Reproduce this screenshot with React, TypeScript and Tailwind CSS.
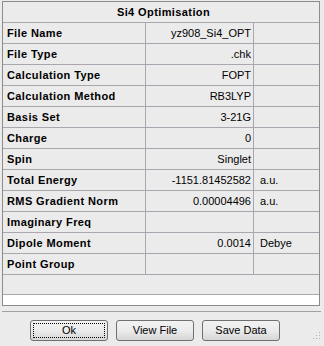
import React from 'react';

type Row = { label: string; value?: string; unit?: string };

const rows: Row[] = [
  { label: 'File Name', value: 'yz908_Si4_OPT' },
  { label: 'File Type', value: '.chk' },
  { label: 'Calculation Type', value: 'FOPT' },
  { label: 'Calculation Method', value: 'RB3LYP' },
  { label: 'Basis Set', value: '3-21G' },
  { label: 'Charge', value: '0' },
  { label: 'Spin', value: 'Singlet' },
  { label: 'Total Energy', value: '-1151.81452582', unit: 'a.u.' },
  { label: 'RMS Gradient Norm', value: '0.00004496', unit: 'a.u.' },
  { label: 'Imaginary Freq' },
  { label: 'Dipole Moment', value: '0.0014', unit: 'Debye' },
  { label: 'Point Group' },
];

function Button({ label, focused }: { label: string; focused?: boolean }) {
  return (
    <button className="relative w-[78px] h-[21px] rounded-[3px] border border-[#707070] bg-gradient-to-b from-[#f2f2f2] via-[#ebebeb] to-[#d6d6d6] text-[11px] text-black leading-none">
      {focused && (
        <span className="absolute inset-[2px] border border-dotted border-black rounded-[1px]" />
      )}
      <span className="relative">{label}</span>
    </button>
  );
}

export default function App() {
  return (
    <div
      className="w-[324px] h-[346px] bg-[#ecebeb] text-black overflow-hidden"
      style={{ fontFamily: '"Liberation Sans", Arial, sans-serif' }}
    >
      <div className="ml-[2px] mt-[1px] w-[318px] border border-[#8c8c8c]">
        <div className="h-[21px] border-b border-[#aaa5ae] flex items-center justify-center pl-[5px] text-[11px] font-bold tracking-[0.4px]">
          Si4 Optimisation
        </div>
        {rows.map((r) => (
          <div key={r.label} className="h-[21px] border-b border-[#aaa5ae] grid grid-cols-[143px_108px_1fr]">
            <div className="border-r border-[#aaa5ae] flex items-center pl-[4px] text-[11px] font-bold tracking-[0.4px]">
              {r.label}
            </div>
            <div className="border-r border-[#aaa5ae] flex items-center justify-end pr-[2px] text-[11px]">
              {r.value}
            </div>
            <div className="flex items-center pl-[6px] text-[11px]">{r.unit}</div>
          </div>
        ))}
        <div className="h-[20px] border-b border-[#aaa5ae]" />
        <div className="h-[10px] bg-white" />
      </div>
      <div className="mt-[5px] ml-[2px] w-[319px] border-t border-[#a0a0a0]" />
      <div className="relative mt-[8px] flex gap-[8px] pl-[30px]">
        <Button label="Ok" focused />
        <Button label="View File" />
        <Button label="Save Data" />
        <svg className="absolute right-[3px] top-[12px]" width="10" height="10" viewBox="0 0 10 10">
          <rect x="8" y="0" width="1" height="1" fill="#b0b0b0" />
          <rect x="5" y="3" width="1" height="1" fill="#b0b0b0" />
          <rect x="8" y="3" width="1" height="1" fill="#b0b0b0" />
          <rect x="2" y="6" width="1" height="1" fill="#b0b0b0" />
          <rect x="5" y="6" width="1" height="1" fill="#b0b0b0" />
          <rect x="8" y="6" width="1" height="1" fill="#b0b0b0" />
        </svg>
      </div>
    </div>
  );
}
